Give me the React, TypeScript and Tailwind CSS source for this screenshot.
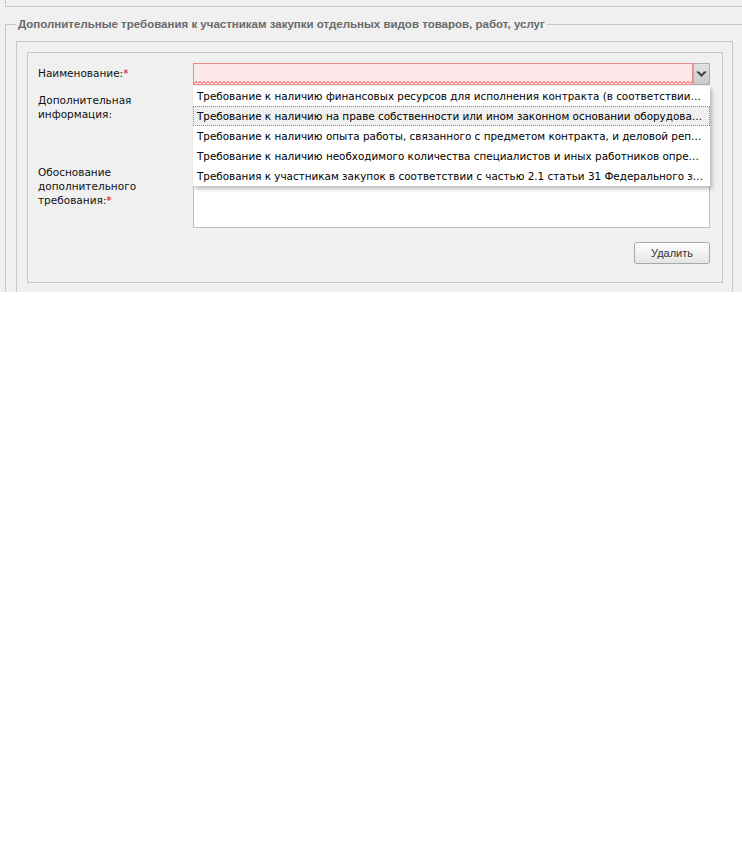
const FONT = { fontFamily: '"DejaVu Sans", Tahoma, sans-serif' };

const options = [
  "Требование к наличию финансовых ресурсов для исполнения контракта (в соответствии с постановлением Правительства РФ)",
  "Требование к наличию на праве собственности или ином законном основании оборудования и других материальных ресурсов",
  "Требование к наличию опыта работы, связанного с предметом контракта, и деловой репутации",
  "Требование к наличию необходимого количества специалистов и иных работников определенного уровня квалификации",
  "Требования к участникам закупок в соответствии с частью 2.1 статьи 31 Федерального закона № 44-ФЗ",
];

function Required() {
  return <span className="text-[#e00000]">*</span>;
}

function ComboBox() {
  return (
    <div className="relative flex h-[22px] flex-1">
      <div className="relative flex-1 border border-[#f08a84] bg-[#fde9e9]">
        {/* invalid field wavy underline */}
        <svg className="absolute bottom-0 left-0 h-[3px] w-full" preserveAspectRatio="none">
          <defs>
            <pattern id="zig" width="4" height="3" patternUnits="userSpaceOnUse">
              <polyline points="0,2.5 2,0.5 4,2.5" fill="none" stroke="#f03030" strokeWidth="1" />
            </pattern>
          </defs>
          <rect width="100%" height="3" fill="url(#zig)" />
        </svg>
      </div>
      <div className="flex w-[17px] items-center justify-center border border-[#b0b0b0] bg-gradient-to-b from-[#e2e2e2] to-[#c9c9c9]">
        <svg width="11" height="7" viewBox="0 0 11 7">
          <polygon points="0,0.5 3,0.5 5.5,3 8,0.5 11,0.5 5.5,6" fill="#444" />
        </svg>
      </div>

      {/* open option list */}
      <div className="absolute left-0 right-0 top-full z-10 mt-px bg-white text-[10.4px] shadow-[2px_3px_4px_rgba(0,0,0,0.25)]">
        {options.map((text, i) => (
          <div
            key={i}
            className={
              i === 1
                ? "h-[20px] truncate border border-dotted border-[#8a8a8a] bg-[#efefef] pl-[3px] pr-[5px] leading-[18px] text-black"
                : "h-[20px] truncate border border-transparent pl-[3px] pr-[5px] leading-[18px] text-black"
            }
          >
            {text}
          </div>
        ))}
      </div>
    </div>
  );
}

export default function App() {
  return (
    <div className="w-full overflow-hidden bg-white text-[10.5px]" style={FONT}>
      <div className="h-[292px] overflow-hidden bg-[#f0f0f0]">
        <div className="ml-[5px] w-[739px]">
          <div className="h-[7px] border-x border-b border-[#c8c8c8]" />

          <fieldset className="mt-[10px] border border-[#c8c8c8] p-[10px]">
            <legend
              className="px-[2px] text-[11.5px] font-bold leading-[14px] text-[#6a6a6a]"
              style={{ fontFamily: '"Liberation Sans", Arial, sans-serif' }}
            >
              Дополнительные требования к участникам закупки отдельных видов товаров, работ, услуг
            </legend>

            <div className="border border-[#c8c8c8] pb-[10px] pl-[10px] pr-[9px] pt-[10px]">
              <div className="border border-[#c8c8c8] pb-[18px] pl-[10px] pr-[12px] pt-[10px] text-[#111]">
                <div className="flex">
                  <label className="w-[155px] shrink-0 pt-[3px] leading-[14px]">
                    Наименование:<Required />
                  </label>
                  <ComboBox />
                </div>

                <div className="mt-[4px] flex">
                  <label className="w-[155px] shrink-0 pr-[20px] pt-[4px] leading-[14px]">
                    Дополнительная информация:
                  </label>
                  <textarea className="h-[68px] flex-1 resize-none border border-[#c0c0c0] bg-white" />
                </div>

                <div className="mt-[4px] flex">
                  <label className="w-[155px] shrink-0 pr-[40px] pt-[4px] leading-[14px]">
                    Обоснование дополнительного требования:<Required />
                  </label>
                  <textarea className="h-[67px] flex-1 resize-none border border-[#c0c0c0] bg-white" />
                </div>

                <div className="mt-[14px] flex justify-end">
                  <button
                    className="h-[22px] w-[76px] rounded-[3px] border border-[#a9a9a9] bg-gradient-to-b from-white to-[#e4e4e4] text-[11px] text-[#333]"
                    style={{ fontFamily: '"Liberation Sans", Arial, sans-serif' }}
                  >
                    Удалить
                  </button>
                </div>
              </div>
            </div>
          </fieldset>
        </div>
      </div>
    </div>
  );
}
